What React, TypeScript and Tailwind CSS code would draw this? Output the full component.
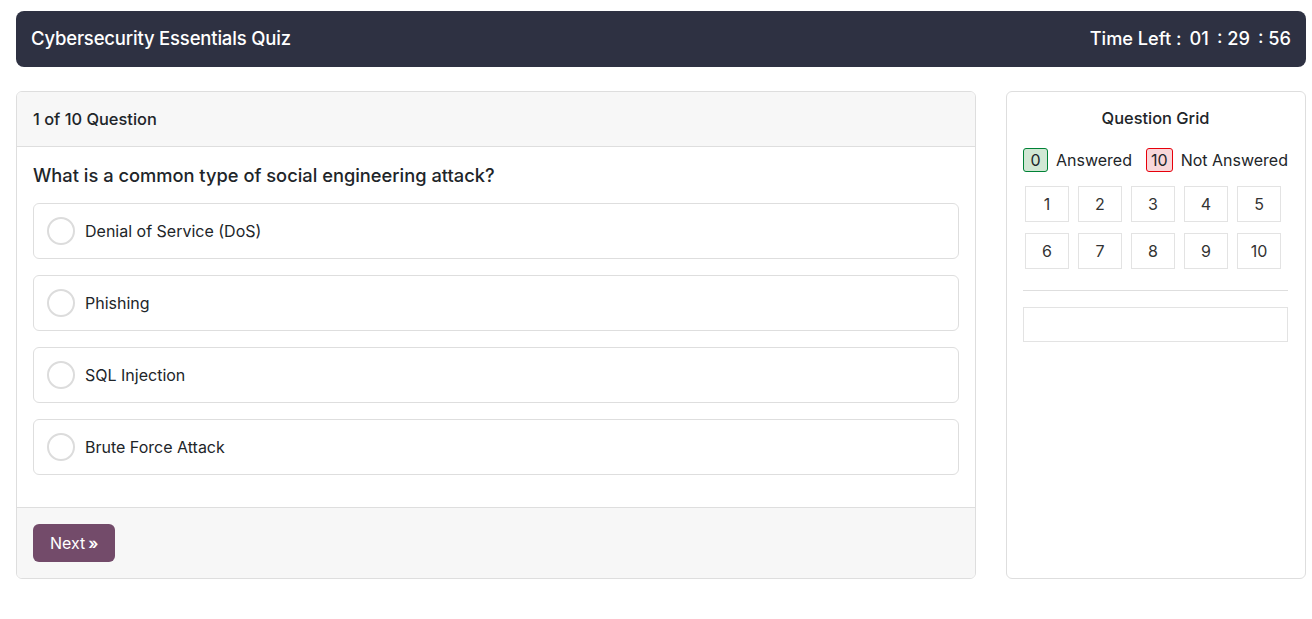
const OPTIONS = ["Denial of Service (DoS)", "Phishing", "SQL Injection", "Brute Force Attack"];

export default function App() {
  return (
    <div className="min-h-screen bg-white pl-4 pr-[6px] pt-[11px] font-['Inter',sans-serif] text-[#212529]">
      <header className="flex h-14 items-center justify-between rounded-lg bg-[#2e3142] px-[15px] text-white">
        <h1 className="text-[18.5px] font-medium tracking-[-0.01em]">Cybersecurity Essentials Quiz</h1>
        <div className="flex items-center text-[18.2px] font-medium">
          <span>Time Left :</span>
          <span className="ml-2">01</span>
          <span className="ml-2">: 29</span>
          <span className="ml-2">: 56</span>
        </div>
      </header>

      <div className="mt-6 flex gap-[30px]">
        <section className="flex h-[488px] w-[960px] shrink-0 flex-col overflow-hidden rounded-md border border-[#dedede]">
          <div className="flex h-[55px] items-center border-b border-[#dedede] bg-[#f7f7f7] px-4 text-[16.4px] font-medium">
            1 of 10 Question
          </div>
          <div className="flex-1 px-4 pt-[15px]">
            <h2 className="text-[18.3px] font-medium text-[#212529]">What is a common type of social engineering attack?</h2>
            <div className="mt-[14px] flex flex-col gap-4">
              {OPTIONS.map((o) => (
                <label key={o} className="flex h-14 items-center gap-[10px] rounded-md border border-[#dedede] px-[13px] text-base">
                  <span className="h-7 w-7 rounded-full border-2 border-[#dcdcdc] bg-white" />
                  <span>{o}</span>
                </label>
              ))}
            </div>
          </div>
          <div className="flex h-[71px] items-center border-t border-[#dedede] bg-[#f7f7f7] px-4">
            <button className="flex h-[38px] items-center rounded-md bg-[#734b6a] px-[17px] text-base text-white">
              Next<span className="ml-[3px] font-semibold">»</span>
            </button>
          </div>
        </section>

        <aside className="h-[488px] w-[300px] shrink-0 rounded-md border border-[#dedede] pl-4 pr-[17px] pt-[14px]">
          <h3 className="text-center text-[16.4px] font-medium">Question Grid</h3>
          <div className="mt-[17px] flex items-center justify-between text-base">
            <div className="flex items-center gap-2">
              <span className="flex h-6 min-w-[25px] items-center justify-center rounded-[3px] border border-green-700 bg-[#d1e7d4] px-1">0</span>
              <span>Answered</span>
            </div>
            <div className="flex items-center gap-2">
              <span className="flex h-6 min-w-[25px] items-center justify-center rounded-[3px] border border-red-600 bg-[#f8d7da] px-1">10</span>
              <span>Not Answered</span>
            </div>
          </div>
          <div className="ml-[2px] mt-[14px] grid grid-cols-[repeat(5,44px)] gap-x-[9px] gap-y-[11px]">
            {Array.from({ length: 10 }, (_, i) => (
              <div key={i} className="flex h-[36px] items-center justify-center border border-[#e3e3e3] text-base text-[#333]">
                {i + 1}
              </div>
            ))}
          </div>
          <hr className="mt-[21px] border-[#dedede]" />
          <div className="mt-4 h-[35px] border border-[#e3e3e3]" />
        </aside>
      </div>
    </div>
  );
}
